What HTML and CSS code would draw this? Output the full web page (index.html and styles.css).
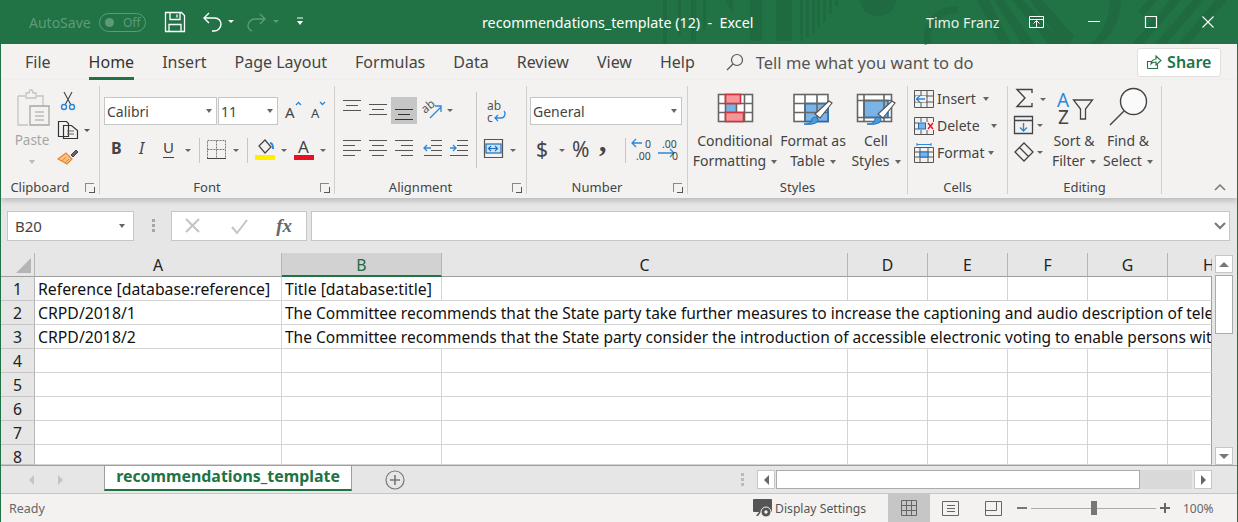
FILE: index.html
```html
<!DOCTYPE html>
<html lang="en">
<head>
	<meta charset="UTF-8">
	<title>recommendations_template (12) - Excel</title>
	<link rel="stylesheet" href="styles.css">
</head>
<body>
<div class="window">
	<!-- title bar -->
	<header class="titlebar">
		<svg class="title-art" width="1238" height="44" viewBox="0 0 1238 44">
			<g fill="#1f6a40">
				<rect x="663" y="0" width="4" height="44"/><rect x="678" y="0" width="3" height="36"/><rect x="691" y="0" width="5" height="41"/><rect x="703" y="0" width="3" height="30"/>
				<polygon points="725,0 733,0 733,14"/><polygon points="750,0 762,0 762,41 750,41"/><rect x="776" y="0" width="16" height="41"/>
				<rect x="800" y="0" width="3" height="41"/><rect x="806" y="0" width="3" height="38"/><rect x="812" y="0" width="3" height="34"/><rect x="817" y="0" width="3" height="28"/><rect x="823" y="0" width="3" height="22"/><rect x="829" y="0" width="3" height="14"/><rect x="835" y="0" width="3" height="6"/>
				<path d="M860 0h36a18 16 0 0 1-36 0z"/>
				<path d="M977 0h12l22 44h-10zM994 0h10l30 44h-12zM1012 0h11l40 44h-14zM1030 0h12l32 36-4 8h-8z"/>
				<path d="M1110 0h11c-1 20-8 34-20 44h-11c12-10 20-24 20-44z"/>
				<path d="M1148 0h9l-14 16-5-5zM1170 0h11l-38 44h-11zM1193 0h11l-38 44h-11zM1216 0h11l-38 44h-11z"/>
			</g>
			<path d="M928 44a28 28 0 0 1 30-34" fill="none" stroke="#1f6a40" stroke-width="7"/>
		</svg>
		<div class="qat">
			<span class="autosave">AutoSave</span>
			<span class="toggle"><i class="toggle-dot"></i>Off</span>
			<svg class="qat-icons" width="150" height="44" viewBox="160 0 150 44" fill="none" stroke="#fff" stroke-width="1.3">
				<path d="M165.5 12.5h16l3 3v16h-19zM170 12.5v7h10v-7M169 31.5v-7h12v7M177 14.5v3"/>
				<path d="M209 13l-5 5 5 5M204 18h11a6 6 0 0 1 6 6 7 7 0 0 1-7 7h-2" stroke-width="1.4"/>
				<polygon points="228,20 234,20 231,23" fill="#fff" stroke="none"/>
				<path d="M260 14l5 5-5 5M265 19h-10a7 7 0 0 0-7 7 6 6 0 0 0 4 5" stroke="#5d9b78" stroke-width="1.4"/>
				<polygon points="273,20 279,20 276,23" fill="#5d9b78" stroke="none"/>
				<path d="M297 18h6" stroke-width="1"/>
				<polygon points="297,21 303,21 300,25" fill="#fff" stroke="none"/>
			</svg>
		</div>
		<div class="doc-title">recommendations_template (12)&nbsp; -&nbsp; Excel</div>
		<div class="user-name">Timo Franz</div>
		<svg class="win-icons" width="196" height="44" viewBox="1025 0 196 44" fill="none" stroke="#fff" stroke-width="1">
			<path d="M1029.5 16.5h14v11h-14zM1029.5 19.5h14M1036.5 27v-6M1033.5 23.500l3-3 3 3"/>
			<path d="M1088 21.500h12"/>
			<path d="M1145.500 16.500h11v11h-11z" stroke-width="1.200"/>
			<path d="M1202.500 16.500l11 11M1213.500 16.500l-11 11" stroke-width="1.100"/>
		</svg>
	</header>

	<!-- ribbon tabs -->
	<nav class="tabs">
		<span class="tab tab-file">File</span>
		<span class="tab tab-active">Home</span>
		<span class="tab">Insert</span>
		<span class="tab">Page Layout</span>
		<span class="tab">Formulas</span>
		<span class="tab">Data</span>
		<span class="tab">Review</span>
		<span class="tab">View</span>
		<span class="tab">Help</span>
		<svg class="search-icon" width="18" height="18" viewBox="0 0 18 18" fill="none" stroke="#555" stroke-width="1.200"><circle cx="11" cy="7" r="5.500"/><path d="M7 11l-6 6"/></svg>
		<span class="tell-me">Tell me what you want to do</span>
		<button class="share">
			<svg width="16" height="16" viewBox="0 0 16 16" fill="none" stroke="#217346" stroke-width="1.100"><path d="M1.500 14.500v-7h4M1.500 14.500h10v-4M5 10c0-3 3-5 5-5V2l5 4.500L10 11V8c-2 0-4 .5-5 2z"/></svg>
			Share
		</button>
	</nav>

	<!-- ribbon -->
	<section class="ribbon">
		<div class="group group-clipboard">
			<div class="group-body clip-body">
				<div class="paste">
					<svg width="36" height="40" viewBox="14 90 36 40" fill="none" stroke="#c4c4c4" stroke-width="1.300">
						<path d="M18 96h7M37 96h6v10M18 96v29h10"/><path d="M26 96v-3h3l1-3h2l1 3h3v5H26z"/>
						<path d="M30 106h19v19H30z" stroke="#a6a6a6"/><path d="M35 112h9M35 116h9M35 120h9" stroke="#bbb"/>
					</svg>
					<span class="paste-label">Paste</span>
					<i class="caret caret-light"></i>
				</div>
				<svg class="clip-tools" width="36" height="80" viewBox="56 90 36 80" fill="none">
					<path d="M64 92l7 13M72 92l-7 13" stroke="#444" stroke-width="1.100"/>
					<circle cx="64" cy="107" r="2.500" stroke="#2b88d8" stroke-width="1.400"/><circle cx="72" cy="107" r="2.500" stroke="#2b88d8" stroke-width="1.400"/>
					<path d="M58.500 121.500h8l2 2v13h-10zM63.500 125.500h8l6 5v8h-14z" stroke="#333" fill="#f3f2f1" stroke-width="1.200"/>
					<path d="M67 131h7M67 134h7" stroke="#666"/>
					<polygon points="84,129 90,129 87,132" fill="#555"/>
					<path d="M67 164l-9-5 8-6 6 6z" fill="#f7c08a" stroke="#e8862a" stroke-width="1.200"/>
					<path d="M62 161l4-4M65 163l4-4" stroke="#e8862a"/>
					<path d="M71 155l5-5 2 2-5 5z" fill="#666" stroke="#444"/>
				</svg>
			</div>
			<div class="group-label label-launch">Clipboard<i class="launcher"></i></div>
		</div>

		<div class="group group-font">
			<div class="group-body font-body">
				<div class="combo-row">
					<span class="combo combo-font">Calibri<i class="caret"></i></span>
					<span class="combo combo-size">11<i class="caret"></i></span>
					<svg width="48" height="28" viewBox="284 97 48 28" fill="#444" font-family="Noto Sans" font-size="15">
						<text x="285" y="118">A</text><path d="M296 105l2.500-2.500 2.500 2.500" fill="none" stroke="#2b88d8" stroke-width="1.300"/>
						<text x="311" y="118" font-size="13">A</text><path d="M320 102l2.500 2.500 2.500-2.500" fill="none" stroke="#2b88d8" stroke-width="1.300"/>
					</svg>
				</div>
				<svg class="tool-row" width="228" height="36" viewBox="104 132 228 36" fill="none" font-family="Noto Sans">
					<text x="111" y="154" font-size="16" font-weight="700" fill="#444">B</text>
					<text x="139" y="154" font-size="16" font-style="italic" fill="#444">I</text>
					<text x="163" y="153" font-size="15" fill="#444">U</text><path d="M163 157.500h11" stroke="#444"/>
					<polygon points="185,149 191,149 188,152" fill="#666"/>
					<path d="M199.500 138v25M247.500 138v25" stroke="#c8c6c4"/>
					<path d="M207.500 140.500h18v18h-18zM216.500 140.500v18M207.500 149.500h18" stroke="#777" stroke-dasharray="2 1"/>
					<path d="M207 158.500h19" stroke="#444"/>
					<polygon points="233,149 239,149 236,152" fill="#666"/>
					<path d="M259 146l6-6 6 7-6 6z" stroke="#444" stroke-width="1.200"/><path d="M270 143c3 0 3 3 3 6" stroke="#2b88d8" stroke-width="2"/>
					<rect x="255" y="155" width="20" height="5" fill="#ffee00"/>
					<polygon points="281,149 287,149 284,152" fill="#666"/>
					<text x="298" y="153" font-size="17" fill="#444">A</text>
					<rect x="294" y="155" width="20" height="5" fill="#e81123"/>
					<polygon points="320,149 326,149 323,152" fill="#666"/>
				</svg>
			</div>
			<div class="group-label label-launch">Font<i class="launcher"></i></div>
		</div>

		<div class="group group-align">
			<div class="group-body">
				<svg class="align-tools" width="190" height="80" viewBox="335 92 190 80" fill="none" stroke="#555" stroke-width="1.200">
					<rect x="391" y="97" width="26" height="27" fill="#c6c6c6" stroke="none"/>
					<path d="M343 100.500h18M346 105.500h12M343 110.500h18"/>
					<path d="M369 104.500h18M372 109.500h12M369 114.500h18"/>
					<path d="M395 109.500h18M398 114.500h12M395 119.500h18" stroke="#333"/>
					<g font-family="Noto Sans" font-size="12" fill="#555" stroke="none"><text x="0" y="0" transform="translate(425 114) rotate(-40)">ab</text></g>
					<path d="M430 118l11-11M435 106h6v6" stroke="#2b88d8" stroke-width="1.300"/>
					<polygon points="447,109 453,109 450,112" fill="#666" stroke="none"/>
					<path d="M476.500 92v76" stroke="#c8c6c4" stroke-width="1"/>
					<g font-family="Noto Sans" font-size="12" fill="#555" stroke="none"><text x="487" y="110">ab</text><text x="487" y="122">c</text></g>
					<path d="M504 111c2 2 1 7-3 7h-6M498 115l-3 3 3 3" stroke="#2b88d8" stroke-width="1.300"/>
					<path d="M343 140.500h18M343 145.500h12M343 150.500h18M343 155.500h12"/>
					<path d="M369 140.500h18M372 145.500h12M369 150.500h18M372 155.500h12"/>
					<path d="M395 140.500h18M401 145.500h12M395 150.500h18M401 155.500h12"/>
					<path d="M431 140.500h11M431 145.500h11M431 150.500h11M424 155.500h18"/><path d="M431 148h-6M427 145l-3 3 3 3" stroke="#2b88d8" stroke-width="1.300"/>
					<path d="M457 140.500h11M457 145.500h11M457 150.500h11M450 155.500h18"/><path d="M450 148h6M453 145l3 3-3 3" stroke="#2b88d8" stroke-width="1.300"/>
					<path d="M484.500 139.500h18v18h-18z"/><rect x="486" y="144" width="15" height="9" fill="#cfe3f5" stroke="#1e6fb8"/>
					<path d="M489 148.500h8M491 146l-2.500 2.500 2.500 2.500M495 146l2.500 2.500-2.500 2.500" stroke="#1e6fb8"/>
					<polygon points="510,149 516,149 513,152" fill="#666" stroke="none"/>
				</svg>
			</div>
			<div class="group-label label-launch">Alignment<i class="launcher"></i></div>
		</div>

		<div class="group group-number">
			<div class="group-body number-body">
				<span class="combo combo-number">General<i class="caret"></i></span>
				<svg class="tool-row" width="152" height="36" viewBox="530 132 152 36" fill="none" font-family="Noto Sans">
					<text x="536" y="157" font-size="21" fill="#444">$</text>
					<polygon points="559,149 565,149 562,152" fill="#666"/>
					<text x="572" y="157" font-size="21" fill="#444">%</text>
					<text x="599" y="151" font-size="30" font-weight="700" font-family="Liberation Serif" fill="#444">,</text>
					<path d="M625.500 138v25" stroke="#c8c6c4"/>
					<path d="M642 143h-10M636 139l-4 4 4 4" stroke="#2b88d8" stroke-width="1.300"/>
					<path d="M658 153h16M670 149l4 4-4 4" stroke="#2b88d8" stroke-width="1.300"/>
					<g font-size="10.500" fill="#444"><text x="645" y="148">0</text><text x="636" y="160">.00</text><text x="662" y="148">.00</text><text x="672" y="160">0</text></g>
				</svg>
			</div>
			<div class="group-label label-launch">Number<i class="launcher"></i></div>
		</div>

		<div class="group group-styles">
			<div class="group-body styles-body">
				<div class="big-btn big-cond">
					<svg width="38" height="30" viewBox="715 93 38 30" fill="none" stroke="#666" stroke-width="1.600">
						<rect x="717.500" y="94.500" width="34" height="27" fill="#fff"/>
						<rect x="724" y="103.500" width="11" height="9" fill="#7ab3e6" stroke="none"/>
						<path d="M717.500 103.500h34M717.500 112.500h34M724.500 94.500v27M735.500 94.500v27M743.500 94.500v27"/>
						<rect x="724.500" y="94.500" width="15" height="9" fill="#f5969d" stroke="#d13438"/>
						<rect x="724.500" y="112.500" width="18" height="9" fill="#f5969d" stroke="#d13438"/>
					</svg>
					<span>Conditional</span>
					<span>Formatting<i class="caret caret-text"></i></span>
				</div>
				<div class="big-btn big-table">
					<svg width="42" height="34" viewBox="795 92 42 34" fill="none" stroke="#666" stroke-width="1.600">
						<rect x="797" y="94.500" width="34" height="27" fill="#fff"/>
						<rect x="808" y="103.500" width="23" height="18" fill="#7ab3e6" stroke="#1e6fb8"/>
						<path d="M797 103.500h34M797 112.500h34M808 94.500v27M820 94.500v27"/>
						<path d="M818 114l14-13 3 2-12 15z" fill="#fff" stroke="#555" stroke-width="1.200"/>
						<path d="M807 124c5 0 7-1 8-5 1-3 6-2 6 1 0 3-5 5-14 4z" fill="#4a9ade" stroke="#1e6fb8" stroke-width="1"/>
					</svg>
					<span>Format as</span>
					<span>Table<i class="caret caret-text"></i></span>
				</div>
				<div class="big-btn big-cell">
					<svg width="40" height="34" viewBox="856 92 40 34" fill="none" stroke="#666" stroke-width="1.600">
						<rect x="857.500" y="94.500" width="34" height="27" fill="#fff"/>
						<rect x="864" y="100.500" width="24" height="17" fill="#7ab3e6" stroke="#1e6fb8"/>
						<path d="M857.500 100.500h34M857.500 117.500h34M864 94.500v27M884 94.500v27"/>
						<path d="M878 114l14-13 3 2-12 15z" fill="#fff" stroke="#555" stroke-width="1.200"/>
						<path d="M867 124c5 0 7-1 8-5 1-3 6-2 6 1 0 3-5 5-14 4z" fill="#4a9ade" stroke="#1e6fb8" stroke-width="1"/>
					</svg>
					<span>Cell</span>
					<span>Styles<i class="caret caret-text"></i></span>
				</div>
			</div>
			<div class="group-label">Styles</div>
		</div>

		<div class="group group-cells">
			<div class="group-body cells-body">
				<div class="cell-btn cell-insert">
					<svg width="20" height="18" viewBox="0 0 20 18" fill="none" stroke="#555"><path d="M.500.500h19v17H.500zM.500 6h19M.500 12h19M7 .500v17M13 .500v17"/><rect x="2" y="6" width="10" height="6" fill="#f3f2f1" stroke="none"/><path d="M11 9H3M6 5.500L2.500 9 6 12.500" stroke="#2b88d8" stroke-width="1.400"/></svg>
					<span>Insert</span><i class="caret"></i>
				</div>
				<div class="cell-btn cell-delete">
					<svg width="20" height="18" viewBox="0 0 20 18" fill="none" stroke="#555"><path d="M.500.500h19v17H.500zM.500 6h19M.500 12h19M7 .500v17M13 .500v17"/><rect x="4" y="5" width="16" height="8" fill="#f3f2f1" stroke="none"/><rect x="4.500" y="6" width="7" height="6" fill="#7ab3e6" stroke="#1e6fb8"/><path d="M14 6l5 6M19 6l-5 6" stroke="#e81123" stroke-width="1.400"/></svg>
					<span>Delete</span><i class="caret"></i>
				</div>
				<div class="cell-btn cell-format">
					<svg width="20" height="20" viewBox="0 0 20 20" fill="none" stroke="#555"><path d="M.500 4.500h19v15H.500zM.500 9h19M.500 14h19M6 4.500v15M14 4.500v15"/><rect x="6" y="9" width="8" height="5" fill="#7ab3e6" stroke="#1e6fb8"/><path d="M3 1.500h14M3 0v3M17 0v3" stroke="#2b88d8"/></svg>
					<span>Format</span><i class="caret"></i>
				</div>
			</div>
			<div class="group-label">Cells</div>
		</div>

		<div class="group group-editing">
			<div class="group-body editing-body">
				<svg width="36" height="76" viewBox="1012 88 36 76" fill="none" stroke="#444" stroke-width="1.300">
					<path d="M1032 93v-3.500h-15l8 8.500-8 8.500h15V103" stroke-width="1.400"/>
					<polygon points="1040,98 1046,98 1043,101" fill="#666" stroke="none"/>
					<path d="M1014.500 116.500h18v17h-18zM1014.500 120.500h18"/>
					<path d="M1023.500 123v8M1020 127.500l3.500 3.500 3.500-3.500" stroke="#2b88d8" stroke-width="1.400"/>
					<polygon points="1037,124 1043,124 1040,127" fill="#666" stroke="none"/>
					<path d="M1015 152l9-9 9 9-9 9zM1019.500 147.500l9 9"/>
					<polygon points="1037,151 1043,151 1040,154" fill="#666" stroke="none"/>
				</svg>
				<div class="big-btn big-sort">
					<svg width="40" height="36" viewBox="1054 90 40 36" fill="none" font-family="Noto Sans">
						<text x="1057" y="107" font-size="19" fill="#2b88d8">A</text>
						<text x="1058" y="124" font-size="19" fill="#444">Z</text>
						<path d="M1073.500 100h19l-7 9v10h-5v-10z" stroke="#444" stroke-width="1.300"/>
					</svg>
					<span>Sort &amp;</span>
					<span>Filter<i class="caret caret-text"></i></span>
				</div>
				<div class="big-btn big-find">
					<svg width="42" height="38" viewBox="1106 90 42 38" fill="none" stroke="#444" stroke-width="1.400">
						<circle cx="1132.500" cy="103.500" r="13" fill="#fafafa"/><path d="M1123 113l-14 14"/>
					</svg>
					<span>Find &amp;</span>
					<span>Select<i class="caret caret-text"></i></span>
				</div>
			</div>
			<div class="group-label">Editing</div>
		</div>
		<svg class="collapse" width="12" height="8" viewBox="0 0 12 8" fill="none" stroke="#777" stroke-width="1.500"><path d="M1 7l5-5 5 5"/></svg>
	</section>

	<!-- formula bar -->
	<section class="formula-bar">
		<span class="name-box">B20<i class="caret"></i></span>
		<svg class="grip" width="6" height="14" viewBox="0 0 6 14" fill="#a6a6a6"><rect x="1" y="0" width="3" height="3"/><rect x="1" y="5" width="3" height="3"/><rect x="1" y="10" width="3" height="3"/></svg>
		<span class="fx-box">
			<svg width="122" height="22" viewBox="0 0 122 22" fill="none" stroke="#c4c4c4" stroke-width="2">
				<path d="M6 4l13 13M19 4L6 17M52 12l5 6 10-13"/>
				<text x="112" y="17" font-family="Liberation Serif" font-size="19" font-style="italic" font-weight="700" fill="#666" stroke="none" text-anchor="end">fx</text>
			</svg>
		</span>
		<span class="formula-input"><svg width="12" height="8" viewBox="0 0 12 8" fill="none" stroke="#777" stroke-width="2"><path d="M1 1l5 5 5-5"/></svg></span>
	</section>

	<!-- sheet -->
	<section class="sheet">
		<div class="grid">
			<div class="corner"><i class="corner-tri"></i></div>
			<div class="col">A</div><div class="col col-active">B</div><div class="col">C</div><div class="col">D</div><div class="col">E</div><div class="col">F</div><div class="col">G</div><div class="col col-clip">H</div>

			<div class="row">1</div><div class="cell">Reference [database:reference]</div><div class="cell">Title [database:title]</div><div class="cell"></div><div class="cell"></div><div class="cell"></div><div class="cell"></div><div class="cell"></div><div class="cell cell-end"></div>

			<div class="row">2</div><div class="cell">CRPD/2018/1</div><div class="cell cell-long">The Committee recommends that the State party take further measures to increase the captioning and audio description of television</div>

			<div class="row">3</div><div class="cell">CRPD/2018/2</div><div class="cell cell-long">The Committee recommends that the State party consider the introduction of accessible electronic voting to enable persons with</div>

			<div class="row">4</div><div class="cell"></div><div class="cell"></div><div class="cell"></div><div class="cell"></div><div class="cell"></div><div class="cell"></div><div class="cell"></div><div class="cell cell-end"></div>
			<div class="row">5</div><div class="cell"></div><div class="cell"></div><div class="cell"></div><div class="cell"></div><div class="cell"></div><div class="cell"></div><div class="cell"></div><div class="cell cell-end"></div>
			<div class="row">6</div><div class="cell"></div><div class="cell"></div><div class="cell"></div><div class="cell"></div><div class="cell"></div><div class="cell"></div><div class="cell"></div><div class="cell cell-end"></div>
			<div class="row">7</div><div class="cell"></div><div class="cell"></div><div class="cell"></div><div class="cell"></div><div class="cell"></div><div class="cell"></div><div class="cell"></div><div class="cell cell-end"></div>
			<div class="row">8</div><div class="cell"></div><div class="cell"></div><div class="cell"></div><div class="cell"></div><div class="cell"></div><div class="cell"></div><div class="cell"></div><div class="cell cell-end"></div>
		</div>
		<div class="vscroll">
			<span class="sb-btn"><i class="tri tri-up"></i></span>
			<span class="v-thumb"></span>
			<span class="sb-btn sb-down"><i class="tri tri-down"></i></span>
		</div>
	</section>

	<!-- sheet tabs -->
	<section class="tabstrip">
		<div class="sheet-nav"><i class="tri tri-left tri-pale"></i><i class="tri tri-right tri-pale"></i></div>
		<div class="sheet-tab">recommendations_template</div>
		<svg class="add-sheet" width="20" height="20" viewBox="0 0 20 20" fill="none" stroke="#777" stroke-width="1.200"><circle cx="10" cy="10" r="9"/><path d="M10 5v10M5 10h10" stroke-width="1.600"/></svg>
		<svg class="split-grip" width="4" height="14" viewBox="0 0 4 14" fill="#bbb"><rect width="3" height="3"/><rect y="5" width="3" height="3"/><rect y="10" width="3" height="3"/></svg>
		<div class="hscroll">
			<span class="sb-btn"><i class="tri tri-left"></i></span>
			<span class="h-thumb"></span>
			<span class="h-track"></span>
			<span class="sb-btn"><i class="tri tri-right"></i></span>
		</div>
	</section>

	<!-- status bar -->
	<footer class="statusbar">
		<span class="ready">Ready</span>
		<svg class="display-icon" width="20" height="19" viewBox="0 0 20 19" fill="#555"><rect x="0" y="0" width="19" height="13" rx="1"/><path d="M3 17l3-4h2l-3 4z"/><circle cx="13" cy="13" r="5" fill="#555" stroke="#f3f2f1"/><circle cx="13" cy="13" r="1.700" fill="#f3f2f1"/></svg>
		<span class="display-text">Display Settings</span>
		<span class="view-btn view-active">
			<svg width="16" height="16" viewBox="0 0 16 16" fill="none" stroke="#666"><path d="M.500.500h15v15H.500zM.500 5.500h15M.500 10.500h15M5.500.500v15M10.500.500v15"/></svg>
		</span>
		<span class="view-btn">
			<svg width="18" height="15" viewBox="0 0 18 15" fill="none" stroke="#666"><path d="M.500.500h16v14H.500zM5 4.500h8M5 7.500h8M5 10.500h8"/></svg>
		</span>
		<span class="view-btn">
			<svg width="17" height="15" viewBox="0 0 17 15" fill="none" stroke="#666"><path d="M.500.500h16v14H.500zM.500 9.500h11V.500"/></svg>
		</span>
		<div class="zoom">
			<i class="zoom-minus"></i>
			<span class="zoom-track"><i class="zoom-thumb"></i></span>
			<i class="zoom-plus"></i>
		</div>
		<span class="zoom-pct">100%</span>
	</footer>
</div>
</body>
</html>
```

FILE: styles.css
```css
*{
	margin: 0;
	padding: 0;
	box-sizing: border-box;
}
html,body{
	background: #f3f2f1;
}
body{
	font-family: "Noto Sans", "Open Sans", sans-serif;
	color: #444;
	overflow: hidden;
}
i{
	display: block;
	font-style: normal;
}
svg{
	display: block;
	flex: none;
	overflow: visible;
}
.window{
	width: 1238px;
	height: 522px;
	display: flex;
	flex-direction: column;
	border-left: 1px solid #217346;
	border-right: 1px solid #217346;
	overflow: hidden;
}

/* title bar */
.titlebar{
	position: relative;
	flex: none;
	height: 44px;
	margin: 0 -1px;
	background: #217346;
	display: flex;
	align-items: center;
	color: #fff;
}
.title-art{
	position: absolute;
	left: 0;
	top: 0;
}
.qat{
	position: relative;
	display: flex;
	align-items: center;
	padding-left: 29px;
	width: 482px;
}
.autosave{
	font-size: 14px;
	color: #5d9b78;
	width: 70px;
}
.toggle{
	width: 47px;
	height: 19px;
	border: 1px solid #5d9b78;
	border-radius: 10px;
	color: #5d9b78;
	font-size: 12px;
	line-height: 17px;
	display: flex;
	align-items: center;
	gap: 9px;
	padding-left: 5px;
}
.toggle-dot{
	width: 9px;
	height: 9px;
	border-radius: 50%;
	background: #5d9b78;
}
.qat-icons{
	margin-left: 14px;
}
.doc-title{
	position: relative;
	width: 444px;
	font-size: 14.300px;
	white-space: nowrap;
}
.user-name{
	position: relative;
	width: 99px;
	padding-top: 1px;
	font-size: 14.200px;
	color: #e8f1ec;
}
.win-icons{
	position: relative;
}

/* ribbon tabs */
.tabs{
	flex: none;
	height: 36px;
	display: flex;
	align-items: center;
	gap: 28px;
	padding-left: 24px;
	font-size: 16px;
	color: #444;
	background: #f3f2f1;
}
.tab{
	position: relative;
	padding-top: 1px;
	line-height: 35px;
	white-space: nowrap;
}
.tab-file{
	margin-right: 10px;
}
.tab-active{
	color: #333;
}
.tab-active:after{
	content: "";
	position: absolute;
	left: 0;
	right: 0;
	bottom: 0;
	height: 3px;
	background: #217346;
}
.search-icon{
	margin-left: 3px;
}
.tell-me{
	margin-left: -16px;
	width: 380px;
	padding-top: 1px;
	font-size: 16.500px;
	color: #555;
	white-space: nowrap;
}
.share{
	width: 84px;
	height: 29px;
	margin-left: -27px;
	background: #fff;
	border: 1px solid #e1dfdd;
	border-radius: 3px;
	font: 600 16px "Noto Sans", sans-serif;
	color: #217346;
	display: flex;
	align-items: center;
	justify-content: center;
	gap: 5px;
}

/* ribbon */
.ribbon{
	position: relative;
	flex: none;
	height: 118px;
	display: flex;
	padding-top: 6px;
	background: #f3f2f1;
	box-shadow: 0 3px 5px rgba(0,0,0,.18);
	z-index: 1;
}
.group{
	position: relative;
	height: 108px;
	display: flex;
	flex-direction: column;
	border-right: 1px solid #d2d0ce;
}
.group-clipboard{ width: 99px; }
.group-font{ width: 235px; }
.group-align{ width: 192px; }
.group-number{ width: 161px; }
.group-styles{ width: 220px; }
.group-cells{ width: 100px; }
.group-editing{ width: 154px; }
.group-body{
	flex: 1;
	min-height: 0;
}
.group-label{
	position: relative;
	flex: none;
	height: 14px;
	line-height: 15px;
	text-align: center;
	font-size: 13px;
	color: #444;
}
.label-launch{
	padding-right: 20px;
}
.launcher{
	position: absolute;
	right: 5px;
	top: 3px;
	width: 9px;
	height: 9px;
	border-left: 1px solid #888;
	border-top: 1px solid #888;
}
.launcher:after{
	content: "";
	position: absolute;
	right: -1px;
	bottom: -1px;
	width: 5px;
	height: 5px;
	border-right: 1px solid #555;
	border-bottom: 1px solid #555;
}
.caret{
	width: 0;
	height: 0;
	border-left: 3.500px solid transparent;
	border-right: 3.500px solid transparent;
	border-top: 4px solid #666;
}
.caret-light{
	border-top-color: #b8b8b8;
}
.caret-text{
	display: inline-block;
	vertical-align: middle;
	margin-left: 5px;
}
.combo{
	height: 28px;
	background: #fff;
	border: 1px solid #c6c6c6;
	display: flex;
	align-items: center;
	justify-content: space-between;
	padding: 0 4px 0 2px;
	font-size: 14px;
	color: #444;
}

/* clipboard */
.clip-body{
	display: flex;
	padding: 4px 0 0 13px;
}
.paste{
	width: 36px;
	display: flex;
	flex-direction: column;
	align-items: center;
}
.paste-label{
	margin-top: 1px;
	font-size: 13.500px;
	color: #a6a6a6;
}
.paste .caret{
	margin-top: 11px;
}
.clip-tools{
	margin-left: 6px;
}

/* font */
.font-body{
	padding: 11px 0 0 4px;
}
.combo-row{
	display: flex;
	gap: 1px;
}
.combo-font{ width: 113px; }
.combo-size{ width: 60px; }
.combo-row svg{
	margin-left: 5px;
}
.tool-row{
	margin-top: 7px;
}

/* alignment */
.align-tools{
	margin-top: 6px;
}

/* number */
.number-body{
	padding: 11px 0 0 3px;
}
.combo-number{
	width: 152px;
}

/* styles */
.styles-body{
	display: flex;
	padding: 6px 0 0 4px;
}
.big-btn{
	display: flex;
	flex-direction: column;
	align-items: center;
	font-size: 14px;
	line-height: 20px;
	white-space: nowrap;
	color: #444;
}
.big-cond{
	width: 86px;
	padding-top: 1px;
}
.big-cond svg{
	margin-bottom: 8px;
}
.big-table{
	width: 66px;
	margin-left: 2px;
}
.big-table svg{
	margin-bottom: 5px;
}
.big-cell{
	width: 60px;
}
.big-cell svg{
	margin-bottom: 5px;
}

/* cells */
.cells-body{
	display: flex;
	flex-direction: column;
	gap: 8px;
	padding: 3px 0 0 6px;
}
.cell-btn{
	height: 19px;
	display: flex;
	align-items: center;
	font-size: 14px;
	color: #444;
}
.cell-btn span{
	margin-left: 3px;
}
.cell-insert .caret{ margin-left: 7px; }
.cell-delete .caret{ margin-left: 11px; }
.cell-format .caret{ margin-left: 3px; }

/* editing */
.editing-body{
	display: flex;
	padding: 2px 0 0 4px;
}
.big-sort{
	width: 44px;
	margin-left: 4px;
	padding-top: 2px;
}
.big-sort svg{
	margin-bottom: 5px;
}
.big-find{
	width: 58px;
	margin-left: 3px;
}
.big-find svg{
	margin-bottom: 5px;
}
.collapse{
	position: absolute;
	right: 11px;
	bottom: 7px;
}

/* formula bar */
.formula-bar{
	flex: none;
	height: 55px;
	background: #e6e6e6;
	display: flex;
	align-items: center;
	padding: 0 6px 0 6px;
}
.name-box{
	width: 127px;
	height: 30px;
	background: #fff;
	border: 1px solid #c6c6c6;
	display: flex;
	align-items: center;
	justify-content: space-between;
	padding: 0 8px 0 7px;
	font-size: 15px;
	color: #444;
}
.grip{
	margin: 0 14px 0 17px;
}
.fx-box{
	width: 136px;
	height: 30px;
	background: #fff;
	border: 1px solid #c6c6c6;
	display: flex;
	align-items: center;
	padding-left: 8px;
}
.formula-input{
	flex: 1;
	height: 30px;
	margin-left: 4px;
	margin-right: 1px;
	background: #fff;
	border: 1px solid #c6c6c6;
	display: flex;
	align-items: center;
	justify-content: flex-end;
	padding-right: 3px;
}

/* sheet */
.sheet{
	flex: none;
	height: 212px;
	display: flex;
	background: #e6e6e6;
}
.grid{
	width: 1211px;
	display: grid;
	grid-template-columns: 34px 247px 160px 406px 80px 80px 80px 80px 44px;
	grid-template-rows: 24px repeat(7, 24px) 20px;
	background: #fff;
	overflow: hidden;
	font-size: 15.800px;
}
.corner{
	position: relative;
	background: #e6e6e6;
	border-right: 1px solid #b5b5b5;
	border-bottom: 1px solid #9e9e9e;
}
.corner-tri{
	position: absolute;
	right: 3px;
	bottom: 3px;
	width: 0;
	height: 0;
	border-left: 15px solid transparent;
	border-bottom: 15px solid #b5b5b5;
}
.col{
	background: #e6e6e6;
	border-right: 1px solid #b5b5b5;
	border-bottom: 1px solid #9e9e9e;
	text-align: center;
	line-height: 24px;
	color: #222;
}
.col-active{
	background: #d2d2d2;
	border-bottom: 2px solid #217346;
	color: #1d6b41;
}
.col-clip{
	border-right: 0;
	text-align: left;
	padding-left: 35px;
	overflow: hidden;
}
.row{
	background: #e6e6e6;
	border-right: 1px solid #b5b5b5;
	border-bottom: 1px solid #c6c6c6;
	text-align: center;
	line-height: 25px;
	color: #222;
	overflow: hidden;
}
.cell{
	border-right: 1px solid #d4d4d4;
	border-bottom: 1px solid #d4d4d4;
	padding-left: 3px;
	line-height: 25px;
	color: #111;
	white-space: nowrap;
	overflow: hidden;
}
.cell-end{
	border-right: 1px solid #9e9e9e;
}
.cell-long{
	grid-column: 3 / span 7;
	border-right: 1px solid #9e9e9e;
	font-size: 15.500px;
}
.vscroll{
	flex: 1;
	display: flex;
	flex-direction: column;
	padding: 2px 2px 0 3px;
	gap: 2px;
}
.sb-btn{
	flex: none;
	width: 18px;
	height: 18px;
	background: #fff;
	border: 1px solid #c6c6c6;
	display: flex;
	align-items: center;
	justify-content: center;
}
.v-thumb{
	width: 18px;
	height: 59px;
	background: #fff;
	border: 1px solid #ababab;
}
.sb-down{
	margin-top: auto;
}
.tri{
	width: 0;
	height: 0;
}
.tri-up{
	border-left: 5px solid transparent;
	border-right: 5px solid transparent;
	border-bottom: 5px solid #777;
}
.tri-down{
	border-left: 5px solid transparent;
	border-right: 5px solid transparent;
	border-top: 5px solid #777;
}
.tri-left{
	border-top: 5px solid transparent;
	border-bottom: 5px solid transparent;
	border-right: 5px solid #666;
}
.tri-right{
	border-top: 5px solid transparent;
	border-bottom: 5px solid transparent;
	border-left: 5px solid #666;
}
.tri-pale.tri-left{
	border-right-color: #c4c4c4;
}
.tri-pale.tri-right{
	border-left-color: #c4c4c4;
}

/* sheet tabs */
.tabstrip{
	flex: none;
	height: 29px;
	background: #e6e6e6;
	border-top: 1px solid #9e9e9e;
	border-bottom: 1px solid #c6c6c6;
	display: flex;
	align-items: center;
}
.sheet-nav{
	width: 103px;
	display: flex;
	justify-content: center;
	gap: 24px;
	padding-right: 13px;
}
.sheet-tab{
	width: 248px;
	height: 25px;
	background: #fff;
	border-left: 1px solid #9e9e9e;
	border-right: 1px solid #9e9e9e;
	border-bottom: 2px solid #217346;
	text-align: center;
	font-size: 15.900px;
	font-weight: 700;
	line-height: 21px;
	color: #217346;
	align-self: flex-start;
}
.add-sheet{
	margin-left: 33px;
}
.split-grip{
	margin-left: 336px;
}
.hscroll{
	display: flex;
	align-items: center;
	margin-left: 12px;
	height: 19px;
}
.hscroll .sb-btn{
	height: 19px;
}
.h-thumb{
	width: 364px;
	height: 19px;
	margin-left: 1px;
	background: #fff;
	border: 1px solid #ababab;
}
.h-track{
	width: 52px;
	height: 19px;
	margin-right: 2px;
	background: #d9d9d9;
}

/* status bar */
.statusbar{
	flex: 1;
	display: flex;
	align-items: center;
	font-size: 12.500px;
	color: #666;
	background: #f3f2f1;
}
.ready{
	width: 752px;
	padding-left: 8px;
}
.display-icon{
	margin-right: 2px;
}
.display-text{
	width: 113px;
	font-size: 12.200px;
	color: #555;
	white-space: nowrap;
}
.view-btn{
	width: 42px;
	height: 100%;
	display: flex;
	align-items: center;
	justify-content: center;
}
.view-active{
	background: #c6c6c6;
}
.zoom{
	display: flex;
	align-items: center;
	margin-left: 3px;
}
.zoom-minus{
	width: 10px;
	height: 2px;
	background: #777;
}
.zoom-track{
	position: relative;
	width: 125px;
	height: 1px;
	margin: 0 4px;
	background: #aaa;
}
.zoom-thumb{
	position: absolute;
	left: 60px;
	top: -7px;
	width: 6px;
	height: 14px;
	background: #777;
}
.zoom-plus{
	position: relative;
	width: 10px;
	height: 2px;
	background: #666;
}
.zoom-plus:after{
	content: "";
	position: absolute;
	left: 4px;
	top: -4px;
	width: 2px;
	height: 10px;
	background: #666;
}
.zoom-pct{
	margin-left: 13px;
	font-size: 12px;
	color: #666;
}
```
